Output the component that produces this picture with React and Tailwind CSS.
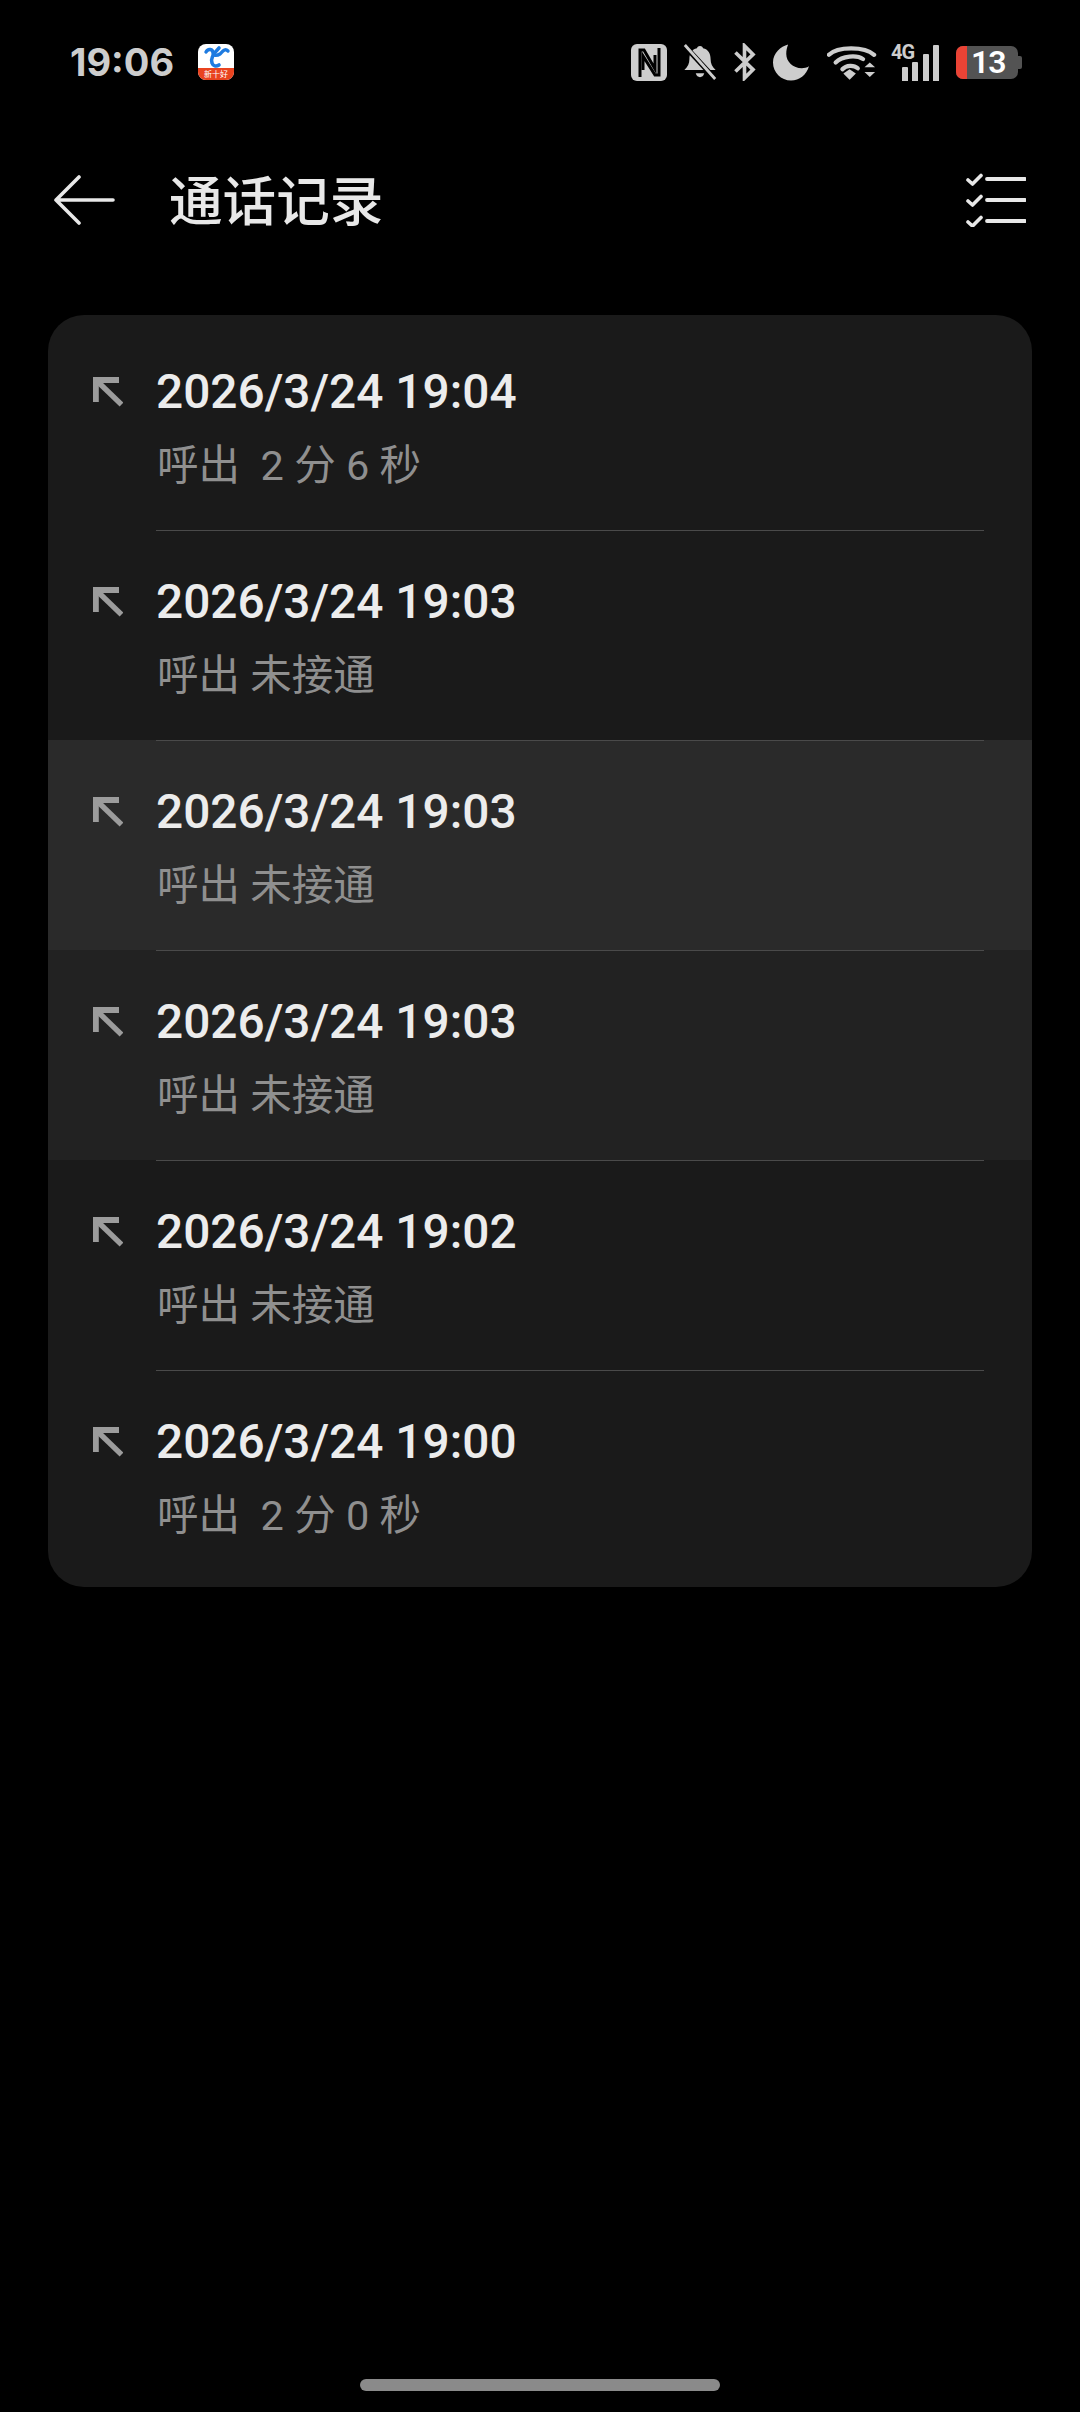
const rows = [
  { t: "2026/3/24 19:04", s: "呼出  2 分 6 秒", bg: "bg-[#1a1a1a]", h: "h-[215px]", pt: "pt-[51px]" },
  { t: "2026/3/24 19:03", s: "呼出 未接通", bg: "bg-[#1a1a1a]", h: "h-[210px]", pt: "pt-[46px]" },
  { t: "2026/3/24 19:03", s: "呼出 未接通", bg: "bg-[#2a2a2a]", h: "h-[210px]", pt: "pt-[46px]" },
  { t: "2026/3/24 19:03", s: "呼出 未接通", bg: "bg-[#222222]", h: "h-[210px]", pt: "pt-[46px]" },
  { t: "2026/3/24 19:02", s: "呼出 未接通", bg: "bg-[#1a1a1a]", h: "h-[210px]", pt: "pt-[46px]" },
  { t: "2026/3/24 19:00", s: "呼出  2 分 0 秒", bg: "bg-[#1a1a1a]", h: "h-[217px]", pt: "pt-[46px]" },
];

function OutArrow() {
  return (
    <svg width="30" height="30" viewBox="0 0 30 30" className="shrink-0 mt-[11px] ml-[1px]">
      <path d="M2.800 25V3H26" fill="none" stroke="#9c9c9c" strokeWidth="6" />
      <path d="M3 3L28.500 27.500" fill="none" stroke="#9c9c9c" strokeWidth="5.400" />
    </svg>
  );
}

function Row({ r, first }) {
  return (
    <div className={`${r.h} ${r.pt} ${r.bg} relative flex pl-[44px] pr-[48px]`}>
      {!first && <div className="absolute left-[108px] right-[48px] top-0 h-[1px] bg-[#4a4a4a]" />}
      <div className="w-[64px]"><OutArrow /></div>
      <div className="flex flex-col">
        <div className="text-[47.8px] leading-[52px] font-medium text-[#ececec] font-['Roboto',sans-serif]">{r.t}</div>
        <div className="mt-[24px] text-[41.5px] leading-[48px] whitespace-pre text-[#8f8f8f] pl-[1px] font-['Roboto','Noto_Sans_CJK_SC',sans-serif]">{r.s}</div>
      </div>
    </div>
  );
}

function StatusIcons() {
  return (
    <div className="flex items-center">
      <svg width="36" height="37" viewBox="0 0 36 37">
        <rect x="0" y="0" width="36" height="37" rx="6" fill="#cdcdcd" />
        <path d="M9 33V6H13L24 25V11" fill="none" stroke="#000" strokeWidth="3" />
        <path d="M28 4V31H24L12 12V26" fill="none" stroke="#000" strokeWidth="3" />
      </svg>
      <svg width="36" height="38" viewBox="0 0 38 38" className="ml-[15px]">
        <path d="M19 2c2 0 3 1 3.200 2.600 5.500 1.200 8 5.400 8 11.400 0 4.600 1.600 7.600 5.300 11.400H2.500c3.700-3.800 5.300-6.800 5.300-11.400 0-6 2.500-10.200 8-11.400C16 3 17 2 19 2z" fill="#cdcdcd" />
        <path d="M14.500 31h9c-.8 2.800-2.500 4-4.500 4s-3.700-1.200-4.500-4z" fill="#cdcdcd" />
        <path d="M2 1L36 38" stroke="#000" strokeWidth="5.500" />
        <path d="M3 1L35 37" stroke="#cdcdcd" strokeWidth="3" />
      </svg>
      <svg width="23" height="38" viewBox="0 0 24 40" className="ml-[15px]">
        <path d="M2.500 10L21 28L12 37V3L21 12L2.500 30" fill="none" stroke="#cdcdcd" strokeWidth="3.800" />
      </svg>
      <svg width="36" height="37" viewBox="0 0 38 38" className="ml-[17px]">
        <path d="M16 0C8 2 0 9 0 19c0 10.500 8.500 19 19 19 9 0 16-5.500 19-15-2.500 1.500-5 2-7.500 2C21 25 14 18 14 10c0-3.800.7-7 2-10z" fill="#cdcdcd" />
      </svg>
      <svg width="50" height="37" viewBox="0 0 52 38" className="ml-[18px]">
        <path d="M2 11C11 2 39 2 49 11" fill="none" stroke="#cdcdcd" strokeWidth="4.400" strokeLinecap="round" />
        <path d="M9 19C16 12 31 11 37.500 15.500" fill="none" stroke="#cdcdcd" strokeWidth="4.400" strokeLinecap="round" />
        <path d="M16 26C20 21.500 28 21.500 32 25" fill="none" stroke="#cdcdcd" strokeWidth="4.400" strokeLinecap="round" />
        <path d="M17 30.500L23.500 26L30 30.500L23.500 37z" fill="#cdcdcd" />
        <path d="M39 24L44.500 19L50 24zM39 29L44.500 34L50 29z" fill="#cdcdcd" />
      </svg>
      <div className="relative w-[48px] h-[37px] ml-[14px]">
        <span className="absolute left-0 top-[-1px] text-[20px] leading-[18px] tracking-[-1px] font-bold text-[#cdcdcd] font-['Roboto',sans-serif]">4G</span>
        <div className="absolute right-0 bottom-0 flex items-end gap-[4.500px]">
          <div className="w-[6px] h-[14px] bg-[#cdcdcd] rounded-t-[1px]" />
          <div className="w-[6px] h-[19px] bg-[#cdcdcd] rounded-t-[1px]" />
          <div className="w-[6px] h-[27px] bg-[#cdcdcd] rounded-t-[1px]" />
          <div className="w-[6px] h-[36px] bg-[#cdcdcd] rounded-t-[1px]" />
        </div>
      </div>
      <div className="relative w-[66px] h-[33px] ml-[17px] mt-[1px]">
        <div className="absolute left-0 top-0 w-[62px] h-[33px] rounded-[7px] bg-[#535353] overflow-hidden">
          <div className="w-[11px] h-full bg-[#ea4335]" />
        </div>
        <div className="absolute right-0 top-[10px] w-[4px] h-[13px] rounded-r-[2px] bg-[#535353]" />
        <span className="absolute left-[15px] top-0 text-[32px] leading-[33px] tracking-[-1px] font-semibold text-white font-['Roboto',sans-serif]">13</span>
      </div>
    </div>
  );
}

function AppIcon() {
  return (
    <div className="relative w-[36px] h-[36px] rounded-[8px] overflow-hidden bg-white ml-[24px]">
      <svg width="36" height="36" viewBox="0 0 36 36" className="absolute inset-0">
        <path d="M8 8C10 4 15 5 15 9C15 12 19 12 22 10C25 7 27 4 30 7" fill="none" stroke="#1e7be0" strokeWidth="3.400" strokeLinecap="round" />
        <path d="M21 4C16 9 12 14 14 19C15 22 18 23 21 21" fill="none" stroke="#1e7be0" strokeWidth="3.600" strokeLinecap="round" />
      </svg>
      <div className="absolute left-0 right-0 bottom-0 h-[12px] bg-[#e9431f] flex items-center justify-center">
        <span className="text-[8px] leading-[12px] text-white font-['Noto_Sans_CJK_SC',sans-serif]">新十好</span>
      </div>
    </div>
  );
}

export default function App() {
  return (
    <div className="relative min-h-[2412px] bg-black flex flex-col font-['Roboto',sans-serif]">
      <div className="h-[94px] flex items-center justify-between pl-[70px] pr-[58px] pt-[30px]">
        <div className="flex items-center">
          <span className="text-[38px] leading-[46px] font-bold text-[#cdcdcd] font-['Inter',sans-serif]">19:06</span>
          <AppIcon />
        </div>
        <StatusIcons />
      </div>
      <div className="h-[115px] mt-[48px] flex items-center justify-between pl-[53px] pr-[54px]">
        <div className="flex items-center">
          <svg width="62" height="50" viewBox="0 0 62 50">
            <path d="M26 2L3 25L26 48M3 25H60" fill="none" stroke="#e8e8e8" strokeWidth="3.600" strokeLinecap="round" strokeLinejoin="round" />
          </svg>
          <span className="ml-[54px] mb-[4px] text-[53.6px] leading-[62px] font-medium text-[#e8e8e8] font-['Noto_Sans_CJK_SC',sans-serif]">通话记录</span>
        </div>
        <svg width="60" height="54" viewBox="0 0 60 54">
          <path d="M2 7L6.500 11L15 2.500M2 28L6.500 32L15 23.500M2 49L6.500 53L15 44.500" fill="none" stroke="#e8e8e8" strokeWidth="3.600" strokeLinecap="round" strokeLinejoin="round" />
          <path d="M21 6H59M21 27H59M21 48H59" fill="none" stroke="#e8e8e8" strokeWidth="3.800" strokeLinecap="round" />
        </svg>
      </div>
      <div className="mx-[48px] mt-[58px] rounded-[36px] overflow-hidden">
        {rows.map((r, i) => <Row key={i} r={r} first={i === 0} />)}
      </div>
      <div className="mt-auto mb-[21px] mx-auto w-[360px] h-[12px] rounded-full bg-[#8a8a8a]" />
    </div>
  );
}
